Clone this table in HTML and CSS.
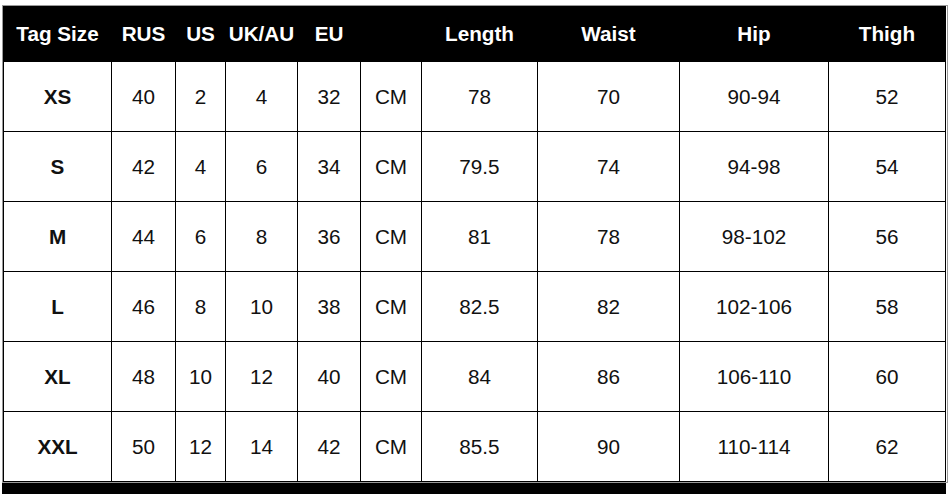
FILE: index.html
```html
<!DOCTYPE html>
<html>
<head>
<meta charset="utf-8">
<link rel="stylesheet" href="styles.css">
</head>
<body>
<div class="page">
  <div class="frame">
    <table class="chart">
      <colgroup>
        <col class="c1"><col class="c2"><col class="c3"><col class="c4"><col class="c5">
        <col class="c6"><col class="c7"><col class="c8"><col class="c9"><col class="c10">
      </colgroup>
      <thead>
        <tr>
          <th>Tag Size</th><th>RUS</th><th>US</th><th>UK/AU</th><th>EU</th><th></th>
          <th>Length</th><th>Waist</th><th>Hip</th><th>Thigh</th>
        </tr>
      </thead>
      <tbody>
        <tr><td class="tag">XS</td><td>40</td><td>2</td><td>4</td><td>32</td><td>CM</td><td>78</td><td>70</td><td>90-94</td><td>52</td></tr>
        <tr><td class="tag">S</td><td>42</td><td>4</td><td>6</td><td>34</td><td>CM</td><td>79.5</td><td>74</td><td>94-98</td><td>54</td></tr>
        <tr><td class="tag">M</td><td>44</td><td>6</td><td>8</td><td>36</td><td>CM</td><td>81</td><td>78</td><td>98-102</td><td>56</td></tr>
        <tr><td class="tag">L</td><td>46</td><td>8</td><td>10</td><td>38</td><td>CM</td><td>82.5</td><td>82</td><td>102-106</td><td>58</td></tr>
        <tr><td class="tag">XL</td><td>48</td><td>10</td><td>12</td><td>40</td><td>CM</td><td>84</td><td>86</td><td>106-110</td><td>60</td></tr>
        <tr><td class="tag">XXL</td><td>50</td><td>12</td><td>14</td><td>42</td><td>CM</td><td>85.5</td><td>90</td><td>110-114</td><td>62</td></tr>
      </tbody>
    </table>
  </div>
  <div class="bar"></div>
</div>
</body>
</html>
```
FILE: styles.css
```css
html, body {
  margin: 0;
  padding: 0;
  background: #fff;
}
body {
  font-family: "Liberation Sans", Arial, sans-serif;
  overflow: hidden;
}
.page {
  padding: 5px 0 0 2px;
  width: 946px;
}
.frame {
  border: 1px solid #9a9a9a;
  width: 944px;
}
.chart {
  border-collapse: collapse;
  table-layout: fixed;
  width: 943px;
}
.c1 { width: 108px; }
.c2 { width: 64px; }
.c3 { width: 50px; }
.c4 { width: 72px; }
.c5 { width: 63px; }
.c6 { width: 61px; }
.c7 { width: 116px; }
.c8 { width: 142px; }
.c9 { width: 149px; }
.c10 { width: 117px; }
.chart th {
  background: #000;
  color: #fff;
  font-weight: bold;
  font-size: 20.7px;
  height: 54px;
  padding: 0;
  text-align: center;
  border: 1px solid #000;
}
.chart td {
  border: 1px solid #000;
  height: 69px;
  padding: 0;
  text-align: center;
  font-size: 20.7px;
  color: #111;
}
.chart td.tag {
  font-weight: bold;
}
.bar {
  height: 12px;
  background: #000;
  width: 944px;
}
```
